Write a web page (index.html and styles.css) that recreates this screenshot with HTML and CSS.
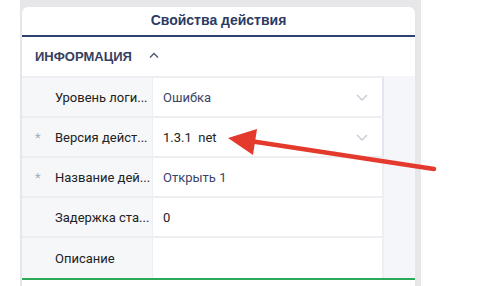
FILE: index.html
```html
<!DOCTYPE html>
<html lang="ru">
<head>
  <meta charset="UTF-8">
  <title>Свойства действия</title>
  <link rel="stylesheet" href="styles.css">
</head>
<body>

<div class="frame">
  <div class="panel">
    <div class="panel-title">Свойства действия</div>

    <div class="section-head">
      <span>Информация</span>
      <svg class="caret" width="10" height="6" viewBox="0 0 10 6"><path d="M1 5.5 L5 1.5 L9 5.5" fill="none" stroke="#4a5670" stroke-width="1.3"/></svg>
    </div>

    <div class="props">
      <div class="cells">
        <div class="row select">
          <div class="label">Уровень логи...</div>
          <div class="value muted">Ошибка<svg class="chev" width="12" height="7" viewBox="0 0 12 7"><path d="M1 1 L6 6 L11 1" fill="none" stroke="#c5c9d2" stroke-width="1.3"/></svg></div>
        </div>
        <div class="row select">
          <div class="label"><i class="req">*</i>Версия дейст...</div>
          <div class="value">1.3.1&nbsp; net<svg class="chev" width="12" height="7" viewBox="0 0 12 7"><path d="M1 1 L6 6 L11 1" fill="none" stroke="#c5c9d2" stroke-width="1.3"/></svg></div>
        </div>
        <div class="row">
          <div class="label"><i class="req">*</i>Название дей...</div>
          <div class="value muted">Открыть 1</div>
        </div>
        <div class="row">
          <div class="label">Задержка ста...</div>
          <div class="value">0</div>
        </div>
        <div class="row">
          <div class="label">Описание</div>
          <div class="value"></div>
        </div>
      </div>
      <div class="side"></div>
    </div>
    <div class="footer-line"></div>
  </div>
</div>

<!-- стрелка-указатель поверх формы -->
<svg class="arrow" width="497" height="286" viewBox="0 0 497 286">
  <line x1="434" y1="169" x2="250" y2="141" stroke="#e43a2e" stroke-width="4.5" stroke-linecap="round"/>
  <polygon points="228,138 257,129 253,155" fill="#e43a2e"/>
</svg>

</body>
</html>
```

FILE: styles.css
```css
body {
  margin: 0;
  padding: 0;
  background-color: #fff;
  font-family: Roboto, "Liberation Sans", sans-serif;
  position: relative;
  height: 286px;
  overflow: hidden;
}
.frame {
  margin-left: 20px;
  width: 393px;
  padding: 7px 6px 0 2px;
  height: 279px;
  background-color: #e7e7e9;
}
.panel {
  background: #fff;
  border-radius: 6px 6px 0 0;
  height: 100%;
}
.panel-title {
  height: 28px;
  line-height: 27px;
  text-align: center;
  font-family: "Liberation Sans", Arial, sans-serif;
  font-weight: bold;
  font-size: 14px;
  color: #2b3b63;
  border-bottom: 2px solid #2c4170;
}
.section-head {
  height: 39px;
  display: flex;
  align-items: center;
  padding-left: 13px;
  font-family: "Liberation Sans", Arial, sans-serif;
  font-weight: bold;
  font-size: 13px;
  text-transform: uppercase;
  color: #34405e;
}
.section-head .caret {
  margin-left: 17px;
  margin-top: -3px;
}
.props {
  display: flex;
}
.cells {
  width: 362px;
  border-top: 2px solid #eceef2;
}
.side {
  flex: 1;
  background: #f5f6f9;
}
.row {
  display: grid;
  grid-template-columns: 130px 232px;
  height: 38px;
  border-bottom: 2px solid #eceef2;
  font-size: 13px;
}
.row:last-child {
  border-bottom: none;
  height: 40px;
}
.label {
  background: #f6f7f9;
  color: #222;
  display: flex;
  align-items: center;
  padding-left: 33px;
  position: relative;
}
.req {
  position: absolute;
  left: 13px;
  top: 12px;
  font-style: normal;
  font-size: 13px;
  color: #a9aeb8;
}
.value {
  border-left: 1px solid #eceef2;
  border-right: 2px solid #eceef2;
  display: flex;
  align-items: center;
  padding-left: 10px;
  color: #222;
}
.select .value {
  border-right-color: #e0e5ef;
}
.value.muted {
  color: #3a4566;
}
.chev {
  margin-left: auto;
  margin-right: 14px;
}
.footer-line {
  border-top: 2px solid #2bab59;
}
.arrow {
  position: absolute;
  left: 0;
  top: 0;
  pointer-events: none;
}
```
